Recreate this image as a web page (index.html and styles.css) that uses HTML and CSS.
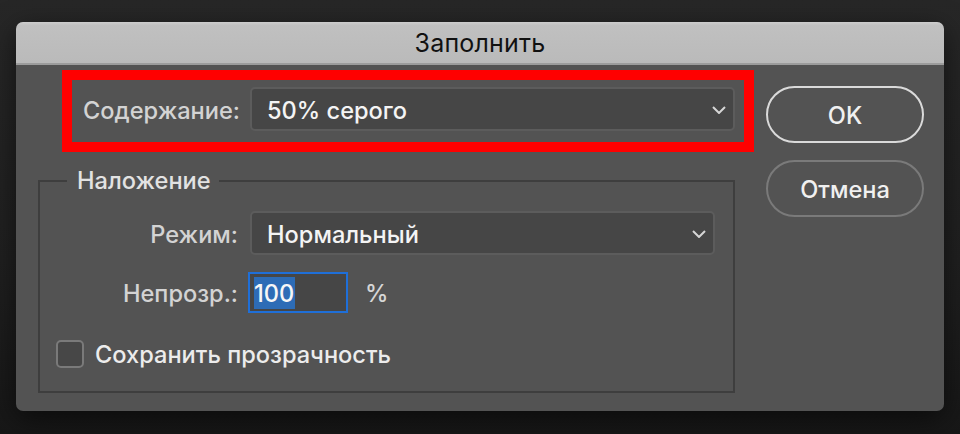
FILE: index.html
```html
<!DOCTYPE html>
<html lang="ru">
<head>
<meta charset="utf-8">
<title>Заполнить</title>
<link rel="stylesheet" href="styles.css">
</head>
<body>
<div class="dialog">
  <div class="titlebar">Заполнить</div>
  <div class="content">
    <div class="main">
      <div class="highlight">
        <div class="field-row">
          <span class="label label-top">Содержание:</span>
          <div class="select select-wide">
            <span class="select-value">50% серого</span>
            <svg class="chevron" width="14" height="8" viewBox="0 0 14 8"><polyline points="1,1 7,7 13,1" fill="none" stroke="#d6d6d6" stroke-width="2"/></svg>
          </div>
        </div>
      </div>
      <fieldset class="group">
        <legend class="group-title">Наложение</legend>
        <div class="field-row mode-row">
          <span class="label label-group">Режим:</span>
          <div class="select select-mode">
            <span class="select-value">Нормальный</span>
            <svg class="chevron" width="14" height="8" viewBox="0 0 14 8"><polyline points="1,1 7,7 13,1" fill="none" stroke="#d6d6d6" stroke-width="2"/></svg>
          </div>
        </div>
        <div class="field-row opacity-row">
          <span class="label label-group label-tight">Непрозр.:</span>
          <div class="num-input"><span class="num-selected">100</span></div>
          <span class="unit">%</span>
        </div>
        <div class="check-row">
          <span class="checkbox"></span>
          <span class="check-label">Сохранить прозрачность</span>
        </div>
      </fieldset>
    </div>
    <div class="buttons">
      <div class="btn btn-default">OK</div>
      <div class="btn btn-cancel">Отмена</div>
    </div>
  </div>
</div>
</body>
</html>
```
FILE: styles.css
```css
* { box-sizing: border-box; }

html, body {
  margin: 0;
  height: 100%;
}

body {
  background: linear-gradient(180deg, #272727 0%, #202020 60%, #171717 100%);
  font-family: Inter, "Liberation Sans", Arial, sans-serif;
  font-size: 23.6px;
  font-weight: 500;
  overflow: hidden;
}

.dialog {
  margin: 22px 0 0 16px;
  width: 928px;
  height: 389px;
  background: #535353;
  border-radius: 7px;
  overflow: hidden;
  box-shadow: 0 8px 28px rgba(0, 0, 0, 0.55);
}

.titlebar {
  height: 43px;
  line-height: 42px;
  text-align: center;
  color: #111111;
  font-size: 25px;
  font-weight: 400;
  letter-spacing: 0.2px;
  background: linear-gradient(180deg, #cdcdcd 0%, #c0c0c0 8%, #bababa 100%);
  border-bottom: 2px solid #9c9c9c;
}

.content {
  display: flex;
}

.main {
  padding-left: 22px;
  width: 738px;
}

.highlight {
  margin: 5px 0 0 24px;
  width: 692px;
  height: 82px;
  border: 10px solid #ff0000;
  padding: 7px 9px 0 0;
}

.field-row {
  display: flex;
  align-items: center;
}

.label {
  color: #d3d3d3;
  text-align: right;
  flex: none;
  padding-top: 2px;
}

.label-top {
  width: 168px;
  margin-right: 10px;
}

.label-group {
  width: 198px;
  margin-right: 12px;
}

.label-tight {
  margin-right: 10px;
}

.select {
  display: flex;
  align-items: center;
  justify-content: space-between;
  height: 44px;
  background: #464646;
  border: 2px solid #5c5c5c;
  border-radius: 5px;
  padding: 2px 7px 0 15px;
  color: #f4f4f4;
}

.select-wide { width: 485px; }
.select-mode { width: 465px; }

.chevron { display: block; margin-top: 0; }

.group {
  margin: 17px 0 0 0;
  width: 697px;
  border: 2px solid #3e3e3e;
  padding: 0 0 22px 0;
  min-width: 0;
}

.group-title {
  margin-left: 27px;
  padding: 0 8px 0 10px;
  line-height: 24px;
  color: #e2e2e2;
}

.mode-row {
  margin-top: 18px;
}

.opacity-row {
  margin-top: 17px;
}

.num-input {
  width: 100px;
  height: 41px;
  background: #464646;
  border: 2px solid #1f6fd8;
  padding: 3px 0 0 4px;
}

.num-selected {
  display: inline-block;
  height: 32px;
  line-height: 34px;
  padding-right: 1px;
  background: #2d6cb6;
  color: #f6f6f6;
}

.unit {
  margin-left: 17px;
  padding-top: 2px;
  color: #d6d6d6;
}

.check-row {
  display: flex;
  align-items: center;
  margin: 25px 0 0 16px;
}

.checkbox {
  width: 28px;
  height: 28px;
  border: 2px solid #7a7a7a;
  border-radius: 5px;
  background: #474747;
  flex: none;
}

.check-label {
  margin-left: 11px;
  padding-top: 2px;
  color: #ececec;
}

.buttons {
  margin-left: 12px;
  padding-top: 21px;
  width: 158px;
  display: flex;
  flex-direction: column;
  gap: 17px;
}

.btn {
  height: 57px;
  border-radius: 29px;
  display: flex;
  align-items: center;
  justify-content: center;
  padding-top: 2px;
  color: #f0f0f0;
}

.btn-default { border: 2px solid #dadada; }
.btn-cancel { border: 2px solid #7a7a7a; }
```
